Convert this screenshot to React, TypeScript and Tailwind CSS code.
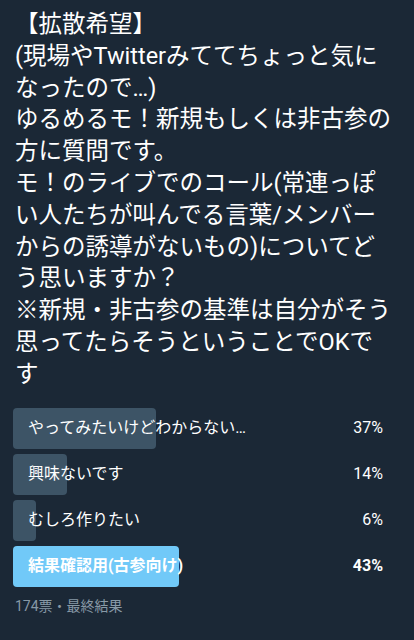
const lines = [
  '【拡散希望】',
  '(現場やTwitterみててちょっと気に',
  'なったので…)',
  'ゆるめるモ！新規もしくは非古参の',
  '方に質問です。',
  'モ！のライブでのコール(常連っぽ',
  'い人たちが叫んでる言葉/メンバー',
  'からの誘導がないもの)についてど',
  'う思いますか？',
  '※新規・非古参の基準は自分がそう',
  '思ってたらそうということでOKで',
  'す',
];

const choices = [
  { label: 'やってみたいけどわからない…', pct: 37, winner: false },
  { label: '興味ないです', pct: 14, winner: false },
  { label: 'むしろ作りたい', pct: 6, winner: false },
  { label: '結果確認用(古参向け)', pct: 43, winner: true },
];

const font = { fontFamily: 'Roboto, "Noto Sans CJK JP", sans-serif' };

export default function App() {
  return (
    <div className="min-h-[640px] w-[414px] bg-[#1b2836] text-white" style={font}>
      <div className="px-[15px] pt-[9px] text-[23.5px] leading-[31.8px]">
        {lines.map((l, i) => (
          <div key={i} className="whitespace-nowrap">
            {l}
          </div>
        ))}
      </div>

      <div className="mt-[17px] flex flex-col gap-[5px] pl-[13px] pr-[15px]">
        {choices.map((c) => (
          <div key={c.label} className="relative flex h-[41px] items-center">
            <div
              className={
                'absolute inset-y-0 left-0 rounded-[4px] ' +
                (c.winner ? 'bg-[#71c9f8]' : 'bg-[#3d5466]')
              }
              style={{ width: `${c.pct}%` }}
            />
            <span
              className={
                'relative flex-1 pl-[15px] text-[16px] ' + (c.winner ? 'font-bold' : '')
              }
            >
              {c.label}
            </span>
            <span
              className={'relative pr-[16px] text-[16px] ' + (c.winner ? 'font-bold' : '')}
            >
              {c.pct}%
            </span>
          </div>
        ))}
      </div>

      <div className="mt-[9px] px-[15px] text-[14px] text-[#8899a6]">174票・最終結果</div>
    </div>
  );
}
